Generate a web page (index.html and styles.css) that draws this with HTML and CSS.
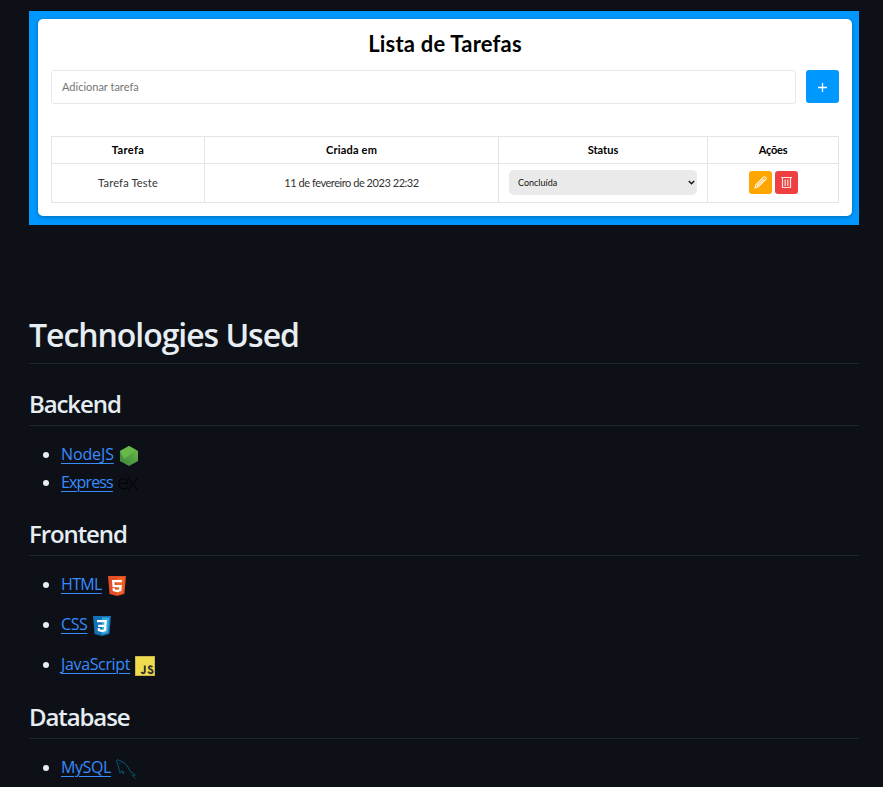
FILE: index.html
```html
<!DOCTYPE html>
<html lang="en">
<head>
<meta charset="utf-8">
<title>Technologies Used</title>
<link rel="stylesheet" href="styles.css">
</head>
<body>
<main class="readme">
  <section class="preview">
    <div class="card">
      <h3 class="card-title">Lista de Tarefas</h3>
      <div class="form">
        <div class="field"><span>Adicionar tarefa</span></div>
        <div class="add"><svg width="11" height="11" viewBox="0 0 11 11"><path d="M5.500 1v9M1 5.500h9" stroke="#fff" stroke-width="1.300"/></svg></div>
      </div>
      <div class="table">
        <div class="th"><span class="t-task">Tarefa</span></div>
        <div class="th"><span class="t-created">Criada em</span></div>
        <div class="th"><span>Status</span></div>
        <div class="th"><span class="t-actions">Ações</span></div>
        <div class="td"><span class="t-name">Tarefa Teste</span></div>
        <div class="td"><span class="t-date">11 de fevereiro de 2023 22:32</span></div>
        <div class="td"><div class="select"><span>Concluída</span><svg width="7" height="5" viewBox="0 0 7 5"><path d="M.8 1l2.700 2.700L6.200 1" fill="none" stroke="#111" stroke-width="1.400"/></svg></div></div>
        <div class="td actions">
          <div class="btn edit"><svg width="15" height="15" viewBox="0 0 15 15" fill="none" stroke="#fff" stroke-opacity=".9" stroke-width="1.100"><path d="M2 13l.8-3.100 8-8c.8-.7 2.900 1.300 2.200 2.200l-8 8zM3.700 11.300l7.200-7.200"/></svg></div>
          <div class="btn remove"><svg width="13" height="13" viewBox="0 0 13 13" fill="none" stroke="#fff" stroke-opacity=".85" stroke-width="1.200"><path d="M1 1.500h11M2.500 1.500v10h8v-10M5.200 3.500v6.500M7.800 3.500v6.500"/></svg></div>
        </div>
      </div>
    </div>
  </section>

  <h1>Technologies Used</h1>

  <h2>Backend</h2>
  <ul>
    <li><a class="l-node">NodeJS</a>
      <svg class="icon" viewBox="0 0 20 20"><defs><linearGradient id="leaf" x1="1" y1="0" x2=".3" y2="1"><stop offset="0" stop-color="#6fbd4b"/><stop offset="1" stop-color="#3f8b3d"/></linearGradient></defs><path d="M10 0l9 5v10l-9 5-9-5V5z" fill="url(#leaf)"/><path d="M1 5l6 12.500L1 15z" fill="#439240"/><path d="M10 0l7 4L5 13 1 5z" fill="#66b848"/></svg></li>
    <li><a class="l-express">Express</a>
      <svg class="icon" viewBox="0 0 20 20" fill="none" stroke="#020304" stroke-width="1.100"><path d="M.8 9.500h8.800c0-6.500-8.800-6.700-8.800 0 0 6.500 7.200 7 8.600 2.800M10.500 4.500l8.800 11M19.300 4.500l-8.800 11"/></svg></li>
  </ul>

  <h2>Frontend</h2>
  <ul class="loose">
    <li><a class="l-html">HTML</a>
      <svg class="icon" viewBox="0 0 20 20"><path d="M1 0h18l-1.600 18L10 20l-7.400-2z" fill="#e44d26"/><path d="M10 1.500h7.300L16 16.800l-6 1.700z" fill="#f16529"/><path d="M14.800 5.200H6.200l.4 4.900h7l-.4 4.100-3.200.9-3.200-.9-.2-2" fill="none" stroke="#fff" stroke-width="2.300"/></svg></li>
    <li><a class="l-css">CSS</a>
      <svg class="icon" viewBox="0 0 20 20"><path d="M1 0h18l-1.600 18L10 20l-7.400-2z" fill="#1572b6"/><path d="M10 1.500h7.300L16 16.800l-6 1.700z" fill="#33a9dc"/><path d="M5 5.200h8.700l-.4 4.700H6.200M13.400 9.900l-.3 4.300-3.100.9-3.100-.9-.2-2" fill="none" stroke="#fff" stroke-width="2.300"/></svg></li>
    <li><a class="l-js">JavaScript</a>
      <svg class="icon" viewBox="0 0 20 20"><path d="M0 0h20v20H0z" fill="#b9a94a"/><path d="M.7.7h18.600v18.600H.7z" fill="#f0db4f"/><path d="M9.800 9.500v6.300c0 2-2.700 2-3.300.1M17.300 11.200c-.8-1.600-3.500-1.300-3.500.4 0 2.100 3.900 1.500 3.900 3.900 0 2.200-3.600 2.300-4.500.2" fill="none" stroke="#323330" stroke-width="1.900"/></svg></li>
  </ul>

  <h2>Database</h2>
  <ul>
    <li><a class="l-mysql">MySQL</a>
      <svg class="icon" viewBox="0 0 20 20" fill="none" stroke="#07587a" stroke-width="1" stroke-linejoin="round"><path d="M4.300 14.200C2.800 11.500 3.300 9.300 2.300 6.800 1.500 4.500-.3 2.200 1 1c1-.8 2.500.6 4 1.300 4.800 1.700 7.200 5.500 8.800 9.500.7 1.800 3.800 2.200 5.400 4.400-1.500-.2-2.400 0-3 .2.500 1 2.400 1.700 3.300 3.100M4.300 14.200c.8-.5.700-1.800 1.200-2.500l2 3.400M7.500 15.100c-.2-1-.2-2 .2-2.800M3.500 4l.8 1"/></svg></li>
  </ul>
</main>
</body>
</html>
```
FILE: styles.css
```css
* { box-sizing: border-box; }
html, body { margin: 0; height: 787px; overflow: hidden; background: #0d1117; }
.readme {
  width: 883px;
  padding: 11px 24px 0 29px;
  color: #e6edf3;
  font: 16px/24px "Open Sans", "Noto Sans", sans-serif;
}
span, a { white-space: nowrap; }

.preview {
  height: 214px;
  padding: 8px 7px 9px 9px;
  background: #0098ff;
  color: #000;
  font-family: Lato, sans-serif;
}
.card {
  height: 197px;
  padding: 11px 13px 0;
  background: #fff;
  border-radius: 5px;
  box-shadow: 0 1px 4px rgba(0, 0, 0, .3);
}
.card-title {
  margin: 0 0 12px;
  text-align: center;
  font-size: 22px;
  line-height: 28px;
  font-weight: 700;
  letter-spacing: .2px;
}
.form { display: flex; gap: 10px; height: 34px; }
.field {
  flex: 1;
  padding: 0 10px;
  border: 1px solid #e8e8e8;
  border-radius: 3px;
  color: #757575;
  font-size: 11px;
  line-height: 32px;
}
.add {
  width: 33px;
  height: 33px;
  display: grid;
  place-items: center;
  background: #0098ff;
  border-radius: 3px;
}
.add svg { margin-top: 2px; }
.table {
  display: grid;
  grid-template-columns: 153px 294px 209px 131px;
  grid-template-rows: 27px 39px;
  width: 788px;
  margin-top: 32px;
  border: solid #e4e4e4;
  border-width: 1px 0 0 1px;
  font-size: 11px;
}
.th, .td {
  display: flex;
  align-items: center;
  justify-content: center;
  border: solid #e4e4e4;
  border-width: 0 1px 1px 0;
}
.th { font-weight: 700; }
.td { color: #333; }
.t-task { letter-spacing: .35px; }
.t-created { letter-spacing: .2px; }
.t-actions { letter-spacing: -.2px; }
.t-name { letter-spacing: .2px; }
.t-date { letter-spacing: -.45px; }
.select {
  display: flex;
  align-items: center;
  justify-content: space-between;
  width: 188px;
  height: 25px;
  margin-top: -1px;
  padding: 0 2px 0 9px;
  background: #eaeaea;
  border-radius: 5px;
  color: #111;
  font-size: 9px;
}
.actions { gap: 3px; padding-bottom: 1px; }
.btn {
  display: grid;
  place-items: center;
  width: 23px;
  height: 23px;
  border-radius: 3px;
}
.edit { background: #ffa500; }
.remove { background: #ee4040; }

h1, h2 { font-weight: 600; border-bottom: 1px solid #21262d; }
h1 {
  height: 50px;
  margin: 89px 0 24px;
  font-size: 32px;
  line-height: 42px;
  letter-spacing: -1.05px;
}
h2 {
  height: 38px;
  margin: 24px 0 16px;
  font-size: 24px;
  line-height: 31px;
  letter-spacing: -1.1px;
}
ul { margin: 0; padding: 0 0 0 32px; list-style: none; }
li { display: flex; align-items: center; height: 24px; }
li + li { margin-top: 4px; }
.loose { padding-bottom: 1px; }
.loose li + li { margin-top: 16px; }
li::before {
  content: "";
  width: 6px;
  height: 6px;
  margin: 2px 12px 0 -18px;
  border-radius: 50%;
  background: #e6edf3;
}
a {
  color: #388bfd;
  text-decoration: underline;
  text-decoration-thickness: 1px;
  text-underline-offset: 3px;
}
.l-node { letter-spacing: -.12px; }
.l-express { letter-spacing: -.85px; }
.l-html { letter-spacing: -.65px; }
.l-css { letter-spacing: -.4px; }
.l-js { letter-spacing: -.35px; }
.l-mysql { letter-spacing: -.4px; }
.icon { width: 20px; height: 20px; margin: 4px 0 0 5px; }
```
